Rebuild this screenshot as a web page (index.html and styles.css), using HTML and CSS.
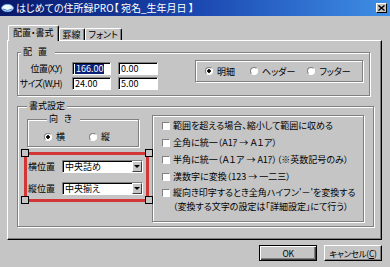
FILE: index.html
```html
<!DOCTYPE html>
<html lang="ja">
<head>
  <meta charset="utf-8">
  <title>はじめての住所録PRO</title>
  <link rel="stylesheet" href="styles.css">
</head>
<body>
<div class="window">

  <div class="titlebar">
    <svg class="app-icon" width="13" height="10" viewBox="0 0 13 10">
      <ellipse cx="6.5" cy="5" rx="5.8" ry="3.6" fill="#eaf6ff" stroke="#7fb2e0" stroke-width="1"/>
      <path d="M2 6 Q6.5 9 11 6" fill="none" stroke="#3f7fc8" stroke-width="1"/>
      <circle cx="4.5" cy="4" r="1" fill="#ffffff"/>
    </svg>
    <span class="title">はじめての住所録PRO【 宛名_生年月日 】</span>
    <span class="close">
      <svg width="7" height="6" viewBox="0 0 7 6"><path d="M0.5 0.5L6.5 5.5M6.5 0.5L0.5 5.5" stroke="#000" stroke-width="1.4"/></svg>
    </span>
  </div>

  <div class="tabs">
    <div class="tab active">配置・書式</div>
    <div class="tab">罫線</div>
    <div class="tab">フォント</div>
  </div>

  <div class="panel">

    <fieldset class="group place">
      <legend class="spaced">配置</legend>
      <div class="place-row">
        <div class="coords">
          <label>位置(X,Y)</label>
          <span class="field"><span class="hilite">166.00</span></span>
          <span class="field">0.00</span>
          <label>サイズ(W,H)</label>
          <span class="field">24.00</span>
          <span class="field">5.00</span>
        </div>
        <div class="etched band">
          <span class="opt"><i class="radio on"></i>明細</span>
          <span class="opt"><i class="radio"></i>ヘッダー</span>
          <span class="opt"><i class="radio"></i>フッター</span>
        </div>
      </div>
    </fieldset>

    <fieldset class="group format">
      <legend>書式設定</legend>
      <div class="format-body">
        <div class="left-col">
          <fieldset class="group direction">
            <legend class="spaced">向き</legend>
            <div class="dir-opts">
              <span class="opt"><i class="radio on"></i>横</span>
              <span class="opt"><i class="radio"></i>縦</span>
            </div>
          </fieldset>

          <div class="selbox">
            <div class="sel-row">
              <label>横位置</label>
              <span class="select">中央詰め<span class="drop"></span></span>
            </div>
            <div class="sel-row">
              <label>縦位置</label>
              <span class="select">中央揃え<span class="drop"></span></span>
            </div>
            <span class="handle tl"></span>
            <span class="handle tr"></span>
            <span class="handle bl"></span>
            <span class="handle br"></span>
          </div>
        </div>

        <div class="etched options">
          <div class="check-row"><i class="box"></i><span>範囲を超える場合、縮小して範囲に収める</span></div>
          <div class="check-row"><i class="box"></i><span>全角に統一（A1ｱ → Ａ１ア）</span></div>
          <div class="check-row"><i class="box"></i><span>半角に統一（Ａ１ア → A1ｱ）（※英数記号のみ）</span></div>
          <div class="check-row"><i class="box"></i><span>漢数字に変換（123 → 一二三）</span></div>
          <div class="check-row tall"><i class="box"></i><span class="text">縦向き印字するとき全角ハイフン'－'を変換する<br>（変換する文字の設定は「詳細設定」にて行う）</span></div>
        </div>
      </div>
    </fieldset>

  </div>

  <div class="buttons">
    <button class="btn default">OK</button>
    <button class="btn">キャンセル(<u>C</u>)</button>
  </div>

</div>
</body>
</html>
```

FILE: styles.css
```css
body {
  margin: 0;
  background: #c5c5c5;
  color: #000;
  font-family: "Noto Sans CJK JP", "Noto Sans", sans-serif;
  font-size: 9px;
  font-feature-settings: "palt";
}

.window {
  width: 390px;
  height: 267px;
  overflow: hidden;
}

/* title bar */
.titlebar {
  height: 16px;
  display: flex;
  align-items: center;
  padding: 0 3px 0 1px;
  background: linear-gradient(90deg, #08186a 0%, #1a47b0 50%, #3f8fe6 100%);
  color: #fff;
  font-size: 10px;
}
.app-icon {
  margin-right: 2px;
}
.title {
  flex: 1;
  white-space: nowrap;
  line-height: 16px;
}
.close {
  width: 11px;
  height: 10px;
  box-sizing: border-box;
  display: flex;
  align-items: center;
  justify-content: center;
  background: #c5c5c5;
  border: 1px solid;
  border-color: #fff #000 #000 #fff;
}

/* tabs */
.tabs {
  display: flex;
  align-items: flex-end;
  height: 15px;
  margin: 9px 0 0 8px;
  position: relative;
  z-index: 1;
}
.tab {
  height: 12px;
  line-height: 11px;
  padding: 0 3px;
  border: 1px solid;
  border-color: #fff #000 transparent #fff;
  border-bottom: none;
  border-radius: 2px 2px 0 0;
  box-shadow: inset -1px 0 #808080;
  box-sizing: border-box;
}
.tab.active {
  height: 16px;
  line-height: 14px;
  padding: 0 4px;
  margin-bottom: -1px;
  background: #c5c5c5;
}

/* panel */
.panel {
  margin-left: 7px;
  width: 375px;
  height: 200px;
  box-sizing: border-box;
  border: 1px solid;
  border-color: #fff #000 #000 #fff;
  box-shadow: inset -1px -1px #808080;
  padding: 5px 0 0 9px;
}

.group,
.etched {
  border: 1px solid #808080;
  box-shadow: inset 1px 1px #fff, 1px 1px #fff;
}
.group {
  margin: 0;
  padding: 0;
  min-width: 0;
  box-sizing: border-box;
}
legend {
  padding: 0 2px;
  margin-left: 3px;
  line-height: 12px;
  background: #c5c5c5;
}
legend.spaced {
  letter-spacing: 6px;
}

/* 配置 */
.place {
  width: 353px;
  padding: 4px 0 5px 0;
}
.place-row {
  display: flex;
  align-items: flex-start;
}
.coords {
  display: grid;
  grid-template-columns: 47px 39px 40px;
  grid-auto-rows: 13px;
  column-gap: 7px;
  row-gap: 2px;
}
.coords label {
  text-align: right;
  padding-right: 3px;
  line-height: 13px;
  white-space: nowrap;
  letter-spacing: -0.6px;
}
.field {
  display: flex;
  align-items: center;
  height: 13px;
  box-sizing: border-box;
  padding-left: 2px;
  background: #fff;
  border: 1px solid;
  border-color: #808080 #fff #fff #808080;
  box-shadow: inset 1px 1px #000;
}
.hilite {
  background: #0a1f78;
  color: #fff;
  padding: 0 1px;
  line-height: 10px;
}
.band {
  margin: -2px 0 0 37px;
  width: 168px;
  height: 22px;
  box-sizing: border-box;
  display: flex;
  align-items: center;
  gap: 12px;
  padding-left: 9px;
}
.band .opt:first-child {
  margin-right: 3px;
}

.opt {
  display: flex;
  align-items: center;
}
.radio {
  width: 6px;
  height: 6px;
  margin-right: 4px;
  border-radius: 50%;
  background: #fff;
  border: 1px solid;
  border-color: #808080 #fff #fff #808080;
}
.radio.on {
  background: radial-gradient(circle, #000 1.5px, #fff 2px);
}

/* 書式設定 */
.format {
  width: 357px;
  margin-top: 4px;
  padding: 0 0 4px 6px;
}
.format-body {
  display: flex;
  align-items: flex-start;
}
.left-col {
  width: 125px;
}
.direction {
  width: 112px;
  margin: 1px 0 0 3px;
  padding: 6px 0 4px 16px;
}
.dir-opts {
  display: flex;
  gap: 24px;
  height: 11px;
  align-items: center;
}

.selbox {
  position: relative;
  margin-top: 5px;
  height: 50px;
  box-sizing: border-box;
  border: 3px solid #d33636;
  padding: 5px 2px 0 1px;
  display: flex;
  flex-direction: column;
  gap: 9px;
}
.sel-row {
  display: flex;
  align-items: center;
  height: 13px;
}
.sel-row label {
  width: 34px;
}
.select {
  width: 81px;
  height: 13px;
  box-sizing: border-box;
  display: flex;
  align-items: center;
  padding-left: 2px;
  background: #fff;
  border: 1px solid;
  border-color: #808080 #fff #fff #808080;
  box-shadow: inset 1px 1px #000;
}
.drop {
  margin-left: auto;
  width: 10px;
  height: 11px;
  box-sizing: border-box;
  display: flex;
  align-items: center;
  justify-content: center;
  background: #c5c5c5;
  border: 1px solid;
  border-color: #fff #404040 #404040 #fff;
}
.drop::after {
  content: "";
  border-left: 3px solid transparent;
  border-right: 3px solid transparent;
  border-top: 3px solid #000;
}
.handle {
  position: absolute;
  width: 8px;
  height: 8px;
  box-sizing: border-box;
  border: 1px solid #000;
  background: #c5c5c5;
}
.handle.tl { left: -6px; top: -6px; }
.handle.tr { right: -7px; top: -6px; }
.handle.bl { left: -6px; bottom: -5px; }
.handle.br { right: -7px; bottom: -5px; }

.options {
  width: 212px;
  height: 107px;
  box-sizing: border-box;
  margin: 3px 0 0 3px;
  padding: 1px 0 0 9px;
}
.check-row {
  display: flex;
  align-items: center;
  height: 17px;
  white-space: nowrap;
}
.box {
  width: 6px;
  height: 6px;
  margin-right: 3px;
  flex: none;
  background: #fff;
  border: 1px solid;
  border-color: #808080 #fff #fff #808080;
}
.check-row.tall {
  height: auto;
  align-items: flex-start;
}
.tall .box {
  margin-top: 4px;
}
.tall .text {
  line-height: 14px;
  padding-top: 1px;
}

/* buttons */
.buttons {
  display: flex;
  justify-content: flex-end;
  gap: 7px;
  padding-right: 8px;
  margin-top: 5px;
}
.btn {
  width: 58px;
  height: 16px;
  box-sizing: border-box;
  padding: 0;
  display: flex;
  align-items: center;
  justify-content: center;
  font: inherit;
  font-size: 8.5px;
  letter-spacing: -0.3px;
  white-space: nowrap;
  color: #000;
  background: #c5c5c5;
  border: 1px solid;
  border-color: #fff #000 #000 #fff;
  box-shadow: inset -1px -1px #808080;
}
.btn.default {
  border-color: #000;
  box-shadow: inset 1px 1px #fff, inset -1px -1px #404040, inset -2px -2px #808080;
}
```
